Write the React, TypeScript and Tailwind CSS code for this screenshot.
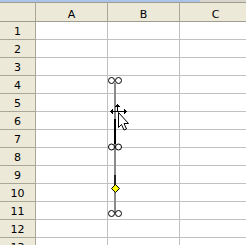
import React from 'react';

const cols = ['A', 'B', 'C'];
const rows = Array.from({ length: 13 }, (_, i) => i + 1);

const Handle = ({ cx, cy }: { cx: number; cy: number }) => (
  <circle cx={cx} cy={cy} r={3} fill="#ffffff" stroke="#000000" strokeWidth={1} />
);

// selected shapes + mouse cursor drawn over the sheet
const Overlay = () => (
  <svg className="absolute left-0 top-0 pointer-events-none" width={246} height={245} viewBox="0 0 246 245">
    <rect x={114} y={83} width={2} height={130} fill="#8a8a8a" />
    <rect x={114} y={119} width={2} height={25} fill="#000000" />
    <rect x={114} y={175} width={2} height={11} fill="#222222" />
    <Handle cx={111.5} cy={80.5} />
    <Handle cx={118.5} cy={80.5} />
    <Handle cx={111.5} cy={147} />
    <Handle cx={118.5} cy={147} />
    <Handle cx={111.5} cy={213.5} />
    <Handle cx={118.5} cy={213.5} />
    <polygon points="115.5,184.5 119.5,188.5 115.5,192.5 111.5,188.5" fill="#ffff00" stroke="#000000" strokeWidth={1} />
    {/* move cross */}
    <g stroke="#000000" strokeWidth={1} fill="#000000" shapeRendering="crispEdges">
      <line x1={111} y1={111.5} x2={126} y2={111.5} />
      <line x1={117.5} y1={106} x2={117.5} y2={112} />
      <polygon points="110,111.5 113,109 113,114" stroke="none" />
      <polygon points="127,111.5 124,109 124,114" stroke="none" />
      <polygon points="117.5,104 115,107 120,107" stroke="none" />
    </g>
    {/* arrow pointer */}
    <polygon
      points="118.5,112.5 118.5,127.5 121.5,124.5 124,130 126.5,129 124,123.5 128.5,123.5"
      fill="#ffffff"
      stroke="#000000"
      strokeWidth={1}
    />
  </svg>
);

const App = () => {
  return <div className="relative w-[246px] h-[245px] overflow-hidden bg-white font-['DejaVu_Sans',sans-serif] text-[11px] text-black">
      <div className="flex h-[2px]">
        <div className="w-[200px] bg-[#a9c3ea]" />
        <div className="flex-1 bg-[#d8d6cc]" />
      </div>
      <div className="flex h-[20px] w-[252px] border-y border-[#9f9d8f] bg-[#ece9d8]">
        <div className="w-[36px] shrink-0 border-r border-[#a9a797]" />
        {cols.map(c => <div key={c} className="w-[72px] shrink-0 flex items-end justify-center pb-[1px] leading-none border-r border-[#a9a797]">
            {c}
          </div>)}
      </div>
      {rows.map(r => <div key={r} className="flex h-[18px] w-[252px]">
          <div className="w-[36px] shrink-0 flex items-end justify-center pb-[2px] leading-none bg-[#ece9d8] border-r border-b border-[#a9a797]">
            {r}
          </div>
          {cols.map(c => <div key={c} className="w-[72px] shrink-0 border-r border-b border-[#c0c0c0]" />)}
        </div>)}
      <Overlay />
    </div>;
};

export default App;
